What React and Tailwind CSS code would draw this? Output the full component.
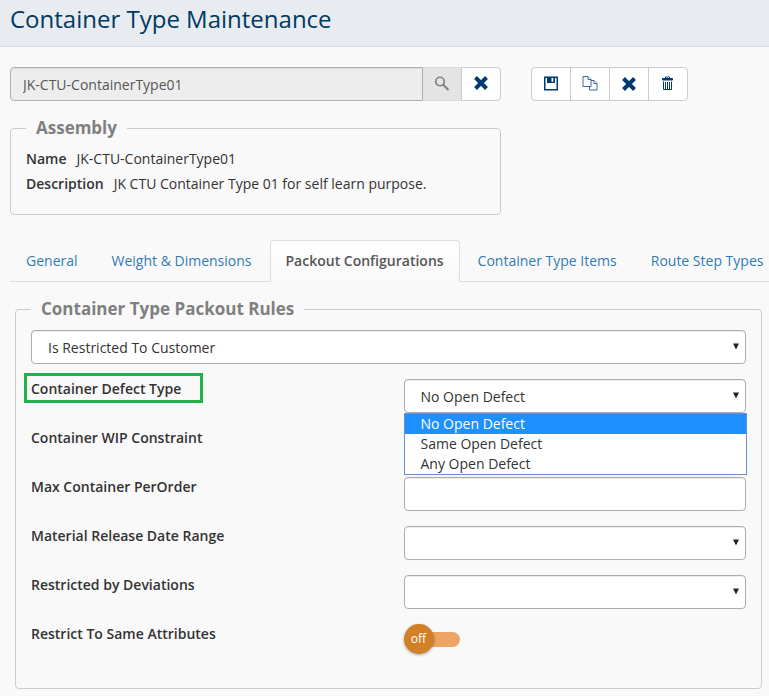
import React from "react";

const box = "h-[34px] w-full rounded border border-[#adadad] bg-white text-sm text-[#333] outline-none shadow-[inset_0_1px_1px_rgba(0,0,0,0.075)]";

function Arrow() {
  return (
    <svg className="pointer-events-none absolute right-[7px] top-[13px]" width="6" height="7" viewBox="0 0 6 7" aria-hidden="true">
      <path d="M0 0.5h6L3 6.5z" fill="#222" />
    </svg>
  );
}

function Select({ id, label, options = [], focused }) {
  return (
    <div className="relative">
      <select
        id={id}
        aria-label={label}
        className={`${box} appearance-none px-4 pt-0.5 ${focused ? "border-[#8fb5dd] shadow-[inset_0_1px_1px_rgba(0,0,0,0.075),0_0_6px_rgba(102,175,233,0.6)]" : ""}`}
      >
        {options.map((o) => (
          <option key={o}>{o}</option>
        ))}
      </select>
      <Arrow />
    </div>
  );
}

function Row({ id, label, children }) {
  return (
    <div className="grid h-[34px] grid-cols-2 items-start gap-[30px]">
      <label htmlFor={id} className="font-semibold text-[#333]">
        {label}
      </label>
      {children}
    </div>
  );
}

function CrossIcon() {
  return (
    <svg width="16" height="16" viewBox="0 0 16 16" aria-hidden="true">
      <path d="M2.500 2.500l11 11M13.500 2.500l-11 11" stroke="#003a70" strokeWidth="4" />
    </svg>
  );
}

function SaveIcon() {
  return (
    <svg width="16" height="16" viewBox="0 0 16 16" aria-hidden="true">
      <path d="M1.750 1.250h12.500v12.500H1.750z" fill="none" stroke="#003a70" strokeWidth="1.500" />
      <path d="M4 1h8v6H4zM8.500 1.800v4h1.800v-4z" fill="#003a70" fillRule="evenodd" />
    </svg>
  );
}

function CopyIcon() {
  return (
    <svg width="16" height="16" viewBox="0 0 16 16" fill="white" stroke="#3f6a94" aria-hidden="true">
      <path d="M7.500 4.500h4.500l3 3v6.500H7.500z" />
      <path d="M12 4.500v3h3" />
      <path d="M1 0.500h5l3 3v7H1z" />
      <path d="M6 0.500v3h3" />
    </svg>
  );
}

function TrashIcon() {
  return (
    <svg width="16" height="16" viewBox="0 0 16 16" fill="none" stroke="#003a70" aria-hidden="true">
      <path d="M5.500 2.500v-1.500h4v1.500" />
      <path d="M2.500 2.500h10v1.500h-10z" fill="#003a70" />
      <path d="M3.500 5.500v8h8v-8M5.500 6v7M7.500 6v7M9.500 6v7" />
    </svg>
  );
}

const tools = [
  ["Save", SaveIcon],
  ["Copy", CopyIcon],
  ["Cancel", CrossIcon],
  ["Delete", TrashIcon],
];

const tabs = ["General", "Weight & Dimensions", "Packout Configurations", "Container Type Items", "Route Step Types"];
const defects = ["No Open Defect", "Same Open Defect", "Any Open Defect"];

export default function App() {
  return (
    <div className="min-h-screen overflow-x-hidden bg-[#f9f9f9] font-['Open_Sans',sans-serif] text-sm leading-5 text-[#333]">
      <header className="h-[47px] border-b border-[#d9dfe6] bg-[#e8ebf0] px-2.5 pt-[3px]">
        <h1 className="text-2xl leading-8 text-[#003a63]">Container Type Maintenance</h1>
      </header>

      <main className="pb-[7px] pt-5">
        <div className="flex gap-[30px] px-2.5">
          <div className="flex w-[491px]">
            <input
              aria-label="Container type"
              readOnly
              defaultValue="JK-CTU-ContainerType01"
              className="h-[34px] min-w-0 flex-1 rounded-l border border-[#b0b0b0] bg-[#ededed] px-3 text-sm text-[#555] outline-none shadow-[inset_0_1px_1px_rgba(0,0,0,0.075)]"
            />
            <button aria-label="Search" className="flex h-[34px] w-[38px] items-center justify-center border-y border-[#dcdcdc] bg-[#e4e4e4]">
              <svg width="18" height="18" viewBox="0 0 18 18" fill="none" stroke="#808080" aria-hidden="true">
                <circle cx="7" cy="6.500" r="4.250" strokeWidth="1.700" />
                <path d="M10 9.500l5.500 5.500" strokeWidth="2" />
              </svg>
            </button>
            <button aria-label="Clear" className="flex h-[34px] w-10 items-center justify-center rounded-r border border-[#ccc] bg-white pb-0.5">
              <CrossIcon />
            </button>
          </div>
          <div className="flex divide-x divide-[#ccc] rounded border border-[#ccc] bg-white">
            {tools.map(([name, Icon]) => (
              <button key={name} aria-label={name} className="flex h-8 w-[39px] items-center justify-center last:w-[38px]">
                <Icon />
              </button>
            ))}
          </div>
        </div>

        <fieldset className="mx-2.5 mt-[15px] h-[99px] w-[491px] rounded border border-[#ccc] px-[15px]">
          <legend className="px-2.5 text-[17px] font-bold leading-6 text-[#808080]">Assembly</legend>
          <dl className="flex flex-col gap-[5px] pt-[9px]">
            <div className="flex gap-2.5">
              <dt className="font-semibold">Name</dt>
              <dd>JK-CTU-ContainerType01</dd>
            </div>
            <div className="flex gap-2.5">
              <dt className="font-semibold">Description</dt>
              <dd>JK CTU Container Type 01 for self learn purpose.</dd>
            </div>
          </dl>
        </fieldset>

        <nav className="ml-2.5 mt-[25px] flex gap-[2px] overflow-hidden whitespace-nowrap shadow-[inset_0_-1px_0_#ddd]">
          {tabs.map((t) => (
            <a
              key={t}
              href="#"
              className={`flex h-[42px] shrink-0 items-center rounded-t border px-[15px] ${
                t === "Packout Configurations"
                  ? "border-[#ddd] border-b-[#f9f9f9] bg-linear-to-b from-white to-[#f9f9f9] font-semibold text-[#555]"
                  : "border-transparent text-[#337ab7]"
              }`}
            >
              {t}
            </a>
          ))}
        </nav>

        <fieldset className="ml-[15px] mr-[7px] mt-[15px] rounded border border-[#ccc] px-[15px] pb-[30px]">
          <legend className="px-2.5 text-[17px] font-bold leading-6 text-[#808080]">Container Type Packout Rules</legend>
          <div className="flex flex-col gap-[15px] pt-[9px]">
            <Select label="Restriction" options={["Is Restricted To Customer"]} />
            <Row
              id="defect"
              label={
                <span className="relative">
                  Container Defect Type
                  <span className="absolute -bottom-[5px] -left-[7px] -right-[22px] -top-[6px] border-3 border-[#22b14c]" />
                </span>
              }
            >
              <div className="relative">
                <Select id="defect" options={defects} focused />
                <ul className="absolute -right-px left-0 top-[34px] z-10 border border-[#6b8fd0] bg-white">
                  {defects.map((d, i) => (
                    <li key={d} className={`h-5 px-4 ${i === 0 ? "bg-[#1e90ff] text-white" : ""}`}>
                      {d}
                    </li>
                  ))}
                </ul>
              </div>
            </Row>
            <Row id="wip" label="Container WIP Constraint">
              <Select id="wip" />
            </Row>
            <Row id="max" label="Max Container PerOrder">
              <input id="max" className={`${box} px-3`} />
            </Row>
            <Row id="range" label="Material Release Date Range">
              <Select id="range" />
            </Row>
            <Row id="deviations" label="Restricted by Deviations">
              <Select id="deviations" />
            </Row>
            <Row id="same" label="Restrict To Same Attributes">
              <label className="flex items-center">
                <input id="same" type="checkbox" role="switch" className="sr-only" />
                <span className="relative z-10 flex size-[30px] items-center justify-center rounded-full bg-[#d27f26] text-xs text-white shadow-[0_1px_3px_rgba(0,0,0,0.35)]">
                  off
                </span>
                <span className="-ml-5 h-[15px] w-[46px] rounded-full bg-[#eda566]" />
              </label>
            </Row>
          </div>
        </fieldset>
      </main>
    </div>
  );
}
